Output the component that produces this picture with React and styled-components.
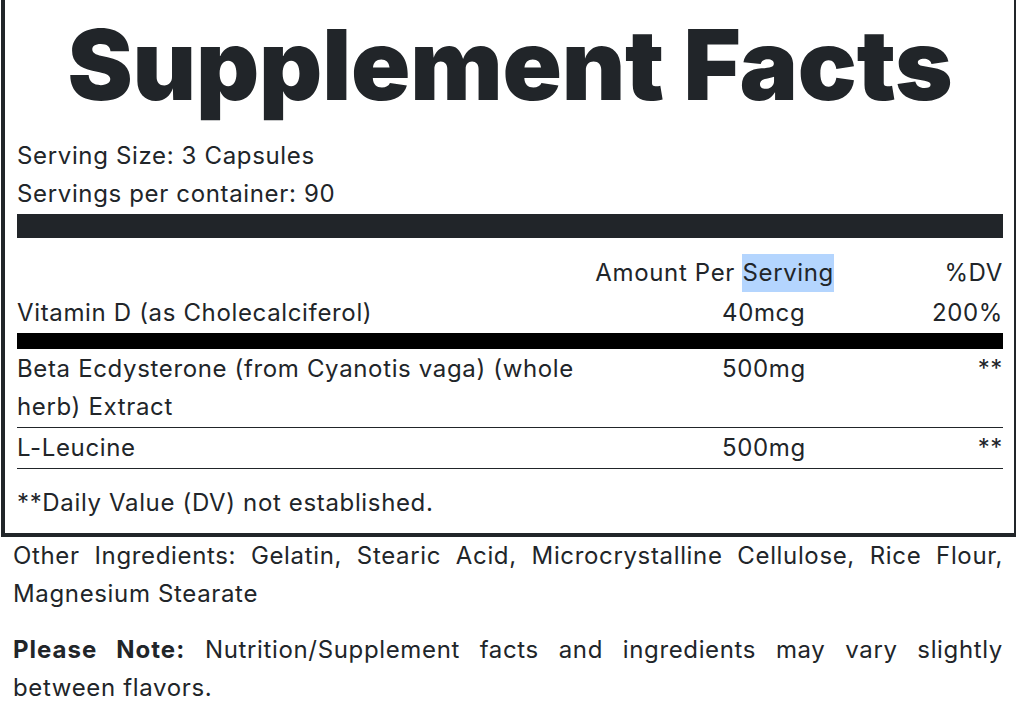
import React from "react";
import styled, { createGlobalStyle } from "styled-components";

const Global = createGlobalStyle`
  html, body { margin: 0; padding: 0; background: #fff; overflow: hidden; }
  body {
    font-family: Inter, "Noto Sans", sans-serif;
    color: #212529;
    font-size: 24px;
    line-height: 38px;
    letter-spacing: 0.65px;
  }
  #root { width: 1016px; overflow: hidden; }
`;

const Page = styled.div`
  display: flex;
  flex-direction: column;
  padding: 0 13px 0 0;
  width: 1016px;
  box-sizing: border-box;
`;

const Label = styled.section`
  margin: -30px -15px 0 1px;
  border: 4px solid #212529;
  padding: 0 11px 11px 12px;
  display: flex;
  flex-direction: column;
`;

const Title = styled.h1`
  margin: 0;
  padding-top: 32px;
  font-family: Inter, sans-serif;
  font-weight: 900;
  font-size: 98px;
  line-height: 118px;
  letter-spacing: -0.2px;
  text-align: center;
  color: #212529;
`;

const Meta = styled.div`
  margin-top: 13px;
`;

const Bar = styled.div`
  height: ${(p) => p.$h}px;
  background: ${(p) => p.$color};
  margin: 1px 0 15px;
`;

const Row = styled.div`
  display: grid;
  grid-template-columns: 705px 180px 1fr;
  padding: 1px 0;
  border-bottom: ${(p) =>
    p.$divider === "thick"
      ? "16px solid #000"
      : p.$divider === "thin"
      ? "1px solid #212529"
      : "0"};
`;

const Name = styled.div`
  padding-right: 100px;
`;

const Amount = styled.div``;

const DV = styled.div`
  text-align: right;
`;

const AmountHeader = styled.div`
  grid-column: 1 / 3;
  text-align: right;
  padding-right: 68px;
`;

const Selected = styled.span`
  display: inline-block;
  background: #b4d5fe;
`;

const Footnote = styled.div`
  margin-top: 15px;
`;

const Paragraph = styled.p`
  margin: 0 0 ${(p) => p.$mb || 0}px 13px;
  text-align: justify;
`;

const Strong = styled.strong`
  font-weight: 700;
  letter-spacing: 1px;
`;

const items = [
  {
    name: "Beta Ecdysterone (from Cyanotis vaga) (whole herb) Extract",
    amount: "500mg",
    dv: "**",
  },
  { name: "L-Leucine", amount: "500mg", dv: "**" },
];

export default function App() {
  return (
    <>
      <Global />
      <Page>
        <Label>
          <Title>Supplement Facts</Title>
          <Meta>
            <div>Serving Size: 3 Capsules</div>
            <div>Servings per container: 90</div>
          </Meta>
          <Bar $h={24} $color="#212529" />
          <Row>
            <AmountHeader>
              Amount Per <Selected>Serving</Selected>
            </AmountHeader>
            <DV>%DV</DV>
          </Row>
          <Row $divider="thick">
            <Name>Vitamin D (as Cholecalciferol)</Name>
            <Amount>40mcg</Amount>
            <DV>200%</DV>
          </Row>
          {items.map((it) => (
            <Row key={it.name} $divider="thin">
              <Name>{it.name}</Name>
              <Amount>{it.amount}</Amount>
              <DV>{it.dv}</DV>
            </Row>
          ))}
          <Footnote>**Daily Value (DV) not established.</Footnote>
        </Label>
        <Paragraph $mb={18}>
          Other Ingredients: Gelatin, Stearic Acid, Microcrystalline Cellulose,
          Rice Flour, Magnesium Stearate
        </Paragraph>
        <Paragraph>
          <Strong>Please Note:</Strong> Nutrition/Supplement facts and
          ingredients may vary slightly between flavors.
        </Paragraph>
      </Page>
    </>
  );
}
